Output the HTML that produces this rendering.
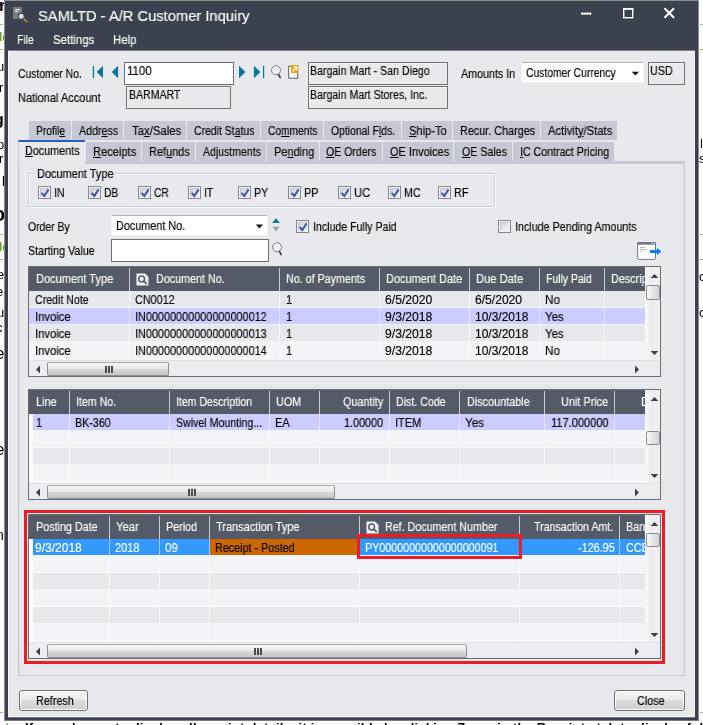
<!DOCTYPE html><html><head><meta charset="utf-8"><title>A/R Customer Inquiry</title><style>
html,body{margin:0;padding:0;}
body{width:703px;height:725px;overflow:hidden;background:#fff;position:relative;font-family:"Liberation Sans",sans-serif;font-size:12px;line-height:14px;color:#000;}
*{box-sizing:border-box;}
.a{position:absolute;}
.t{position:absolute;white-space:nowrap;will-change:transform;-webkit-text-stroke:0.15px currentColor;font-size:12px;line-height:14px;height:14px;transform-origin:0 0;}
.w{color:#fff;}
.tab{position:absolute;background:#c7cad6;height:19px;}
u{text-decoration:underline;text-underline-offset:1px;text-decoration-thickness:1px;}
.fld{position:absolute;border:1px solid #717171;background:#e8e9ed;box-shadow:inset 1px 1px 0 #f4f4f6;}
.inp{position:absolute;border:1px solid #6c6c6c;background:#fff;}
.cb{position:absolute;width:13px;height:13px;border:1px solid #84878c;background:#f4f4f4;}
.cb i{position:absolute;left:1px;top:1px;width:9px;height:9px;border:1px solid #c4c8ce;border-right-color:#e2e4e8;border-bottom-color:#e2e4e8;background:linear-gradient(135deg,#cdd2d9,#f7f7f8);}
.grid{position:absolute;border:1px solid #6d6d6d;background:#ecedf1;overflow:hidden;}
.gh{position:absolute;background:#555a68;height:24px;top:0;}
.sep{position:absolute;width:1px;}
.row{position:absolute;left:0;height:17px;border-bottom:1px solid rgba(255,255,255,0.5);}
.btn{position:absolute;border:1px solid #707070;border-radius:3px;background:linear-gradient(#f4f4f4 0%,#ececec 45%,#dcdcdc 50%,#d0d0d0 100%);box-shadow:inset 0 0 0 1px #fbfbfb;}
</style></head><body>
<div class="a" style="left:0;top:0;width:4px;height:725px;overflow:hidden;">
<span class="a" style="left:-1px;top:-3px;white-space:nowrap;will-change:transform;font-size:17px;line-height:1;font-weight:bold;color:#000;">r</span>
<span class="a" style="left:-1px;top:31px;white-space:nowrap;will-change:transform;font-size:12px;line-height:1;font-weight:bold;color:#6a9f35;">ld</span>
<span class="a" style="left:-3px;top:60px;white-space:nowrap;will-change:transform;font-size:13px;line-height:1;color:#000;">u</span>
<span class="a" style="left:-1px;top:81px;white-space:nowrap;will-change:transform;font-size:13px;line-height:1;color:#000;">r</span>
<span class="a" style="left:-6px;top:112px;white-space:nowrap;will-change:transform;font-size:16px;line-height:1;font-weight:bold;color:#000;">g</span>
<span class="a" style="left:-3px;top:138px;white-space:nowrap;will-change:transform;font-size:13px;line-height:1;color:#000;">o</span>
<span class="a" style="left:-1px;top:152px;white-space:nowrap;will-change:transform;font-size:13px;line-height:1;color:#000;">r</span>
<span class="a" style="left:2px;top:172px;white-space:nowrap;will-change:transform;font-size:13px;line-height:1;color:#000;">p</span>
<span class="a" style="left:-7px;top:204px;white-space:nowrap;will-change:transform;font-size:20px;line-height:1;font-weight:bold;color:#000;">o</span>
<span class="a" style="left:-1px;top:241px;white-space:nowrap;will-change:transform;font-size:12px;line-height:1;font-weight:bold;color:#6a9f35;">ld</span>
<span class="a" style="left:-3px;top:268px;white-space:nowrap;will-change:transform;font-size:13px;line-height:1;color:#000;">e</span>
<span class="a" style="left:-4px;top:285px;white-space:nowrap;will-change:transform;font-size:13px;line-height:1;color:#000;">e</span>
<span class="a" style="left:-3px;top:306px;white-space:nowrap;will-change:transform;font-size:13px;line-height:1;color:#000;">u</span>
<span class="a" style="left:-4px;top:321px;white-space:nowrap;will-change:transform;font-size:13px;line-height:1;color:#000;">c</span>
<span class="a" style="left:-5px;top:345px;white-space:nowrap;will-change:transform;font-size:17px;line-height:1;color:#000;">e</span>
<span class="a" style="left:-5px;top:441px;white-space:nowrap;will-change:transform;font-size:17px;line-height:1;color:#000;">e</span>
<span class="a" style="left:-4px;top:528px;white-space:nowrap;will-change:transform;font-size:14px;line-height:1;color:#000;">n</span>
<div class="a" style="left:0;top:24px;width:4px;height:1px;background:linear-gradient(90deg,#6a9f35 0 1px,transparent 1px 2px,#6a9f35 2px 3px,transparent 3px 4px);"></div>
<div class="a" style="left:0;top:49px;width:4px;height:1px;background:linear-gradient(90deg,#6a9f35 0 1px,transparent 1px 2px,#6a9f35 2px 3px,transparent 3px 4px);"></div>
<div class="a" style="left:0;top:234px;width:4px;height:1px;background:linear-gradient(90deg,#6a9f35 0 1px,transparent 1px 2px,#6a9f35 2px 3px,transparent 3px 4px);"></div>
<div class="a" style="left:0;top:259px;width:4px;height:1px;background:linear-gradient(90deg,#6a9f35 0 1px,transparent 1px 2px,#6a9f35 2px 3px,transparent 3px 4px);"></div>
<div class="a" style="left:0;top:712px;width:4px;height:1px;background:linear-gradient(90deg,#6a9f35 0 1px,transparent 1px 2px,#6a9f35 2px 3px,transparent 3px 4px);"></div>
</div>
<div class="a" style="left:699px;top:0;width:4px;height:725px;overflow:hidden;">
<div class="a" style="left:1px;top:24px;width:3px;height:1px;background:linear-gradient(90deg,#6a9f35 0 1px,transparent 1px 2px,#6a9f35 2px 3px);"></div>
<div class="a" style="left:1px;top:49px;width:3px;height:1px;background:linear-gradient(90deg,#6a9f35 0 1px,transparent 1px 2px,#6a9f35 2px 3px);"></div>
<div class="a" style="left:1px;top:234px;width:3px;height:1px;background:linear-gradient(90deg,#6a9f35 0 1px,transparent 1px 2px,#6a9f35 2px 3px);"></div>
<div class="a" style="left:1px;top:259px;width:3px;height:1px;background:linear-gradient(90deg,#6a9f35 0 1px,transparent 1px 2px,#6a9f35 2px 3px);"></div>
<div class="a" style="left:1px;top:712px;width:3px;height:1px;background:linear-gradient(90deg,#6a9f35 0 1px,transparent 1px 2px,#6a9f35 2px 3px);"></div>
<span class="a" style="left:0.5px;top:137px;white-space:nowrap;will-change:transform;font-size:13px;line-height:1;color:#000;">ls</span>
<span class="a" style="left:0px;top:152px;white-space:nowrap;will-change:transform;font-size:13px;line-height:1;color:#000;">s</span>
<span class="a" style="left:0px;top:270px;white-space:nowrap;will-change:transform;font-size:13px;line-height:1;color:#000;">c</span>
<span class="a" style="left:0px;top:306px;white-space:nowrap;will-change:transform;font-size:13px;line-height:1;color:#000;">c</span>
</div>
<div class="a" style="left:0;top:721px;width:703px;height:4px;overflow:hidden;">
<span class="a" style="right:682px;top:-1px;white-space:nowrap;will-change:transform;font-size:13px;line-height:15px;font-weight:bold;color:#6a9f35;">Note:</span>
<span class="a" style="left:25px;top:-1px;white-space:nowrap;will-change:transform;font-size:13px;line-height:15px;font-weight:bold;letter-spacing:0.2px;">If you choose to display all receipt details, it is possible by clicking Zoom in the Receipts tab to display full transaction if you need to display</span>
</div>
<div class="a" style="left:4px;top:0px;width:695px;height:721px;background:#3c4150;border:1px solid #8d8d8d;border-bottom-color:#7a7c84;"></div>
<div class="a" style="left:8px;top:50px;width:687px;height:667px;background:#e8e9ed;border-left:1px solid #f6f6f8;border-right:1px solid #f6f6f8;border-bottom:1px solid #f6f6f8;"></div>
<div class="a" style="left:8px;top:717px;width:687px;height:1px;background:#6e727c;"></div>
<div class="a" style="left:8px;top:50px;width:687px;height:1px;background:#7d7e84;"></div>
<div class="a" style="left:9px;top:51px;width:685px;height:1px;background:#f2f2f5;"></div>
<svg class="a" style="left:11px;top:5px;" width="20" height="20" viewBox="0 0 20 20"><rect x="2" y="2" width="9" height="12" fill="#7c7c7c"/><rect x="4" y="4" width="5" height="1.2" fill="#d5ecff"/><rect x="4" y="6" width="3.2" height="1.2" fill="#d5ecff"/><line x1="12.5" y1="13.5" x2="16.3" y2="17.2" stroke="#d08a3a" stroke-width="1.6"/><circle cx="10.3" cy="11.3" r="3" fill="#cfe6fb" stroke="#33363f" stroke-width="1"/></svg>
<span class="t w" style="left:37.6px;top:6px;font-size:15.5px;line-height:20px;height:20px;transform:scaleX(0.9493);">SAMLTD - A/R Customer Inquiry</span>
<span class="t w" style="left:17.0px;top:33px;font-size:12.3px;line-height:15px;height:15px;transform:scaleX(0.8427);">File</span>
<span class="t w" style="left:52.8px;top:33px;font-size:12.3px;line-height:15px;height:15px;transform:scaleX(0.9293);">Settings</span>
<span class="t w" style="left:113.0px;top:33px;font-size:12.3px;line-height:15px;height:15px;transform:scaleX(0.9251);">Help</span>
<svg class="a" style="left:570px;top:0px;" width="125" height="30" viewBox="0 0 125 30"><rect x="11" y="12.6" width="10.4" height="2" fill="#fff"/><rect x="53.7" y="8.9" width="9" height="8.8" fill="none" stroke="#fff" stroke-width="1.4"/><rect x="53" y="8" width="10.4" height="1.6" fill="#fff"/><path d="M94.5 8.2 L104 17.7 M104 8.2 L94.5 17.7" stroke="#fff" stroke-width="2.1" fill="none"/></svg>
<span class="t " style="left:18.34px;top:67px;transform:scaleX(0.8622);">Customer No.</span>
<span class="t " style="left:18.32px;top:91px;transform:scaleX(0.9171);">National Account</span>
<svg class="a" style="left:90px;top:64px;" width="180" height="18" viewBox="0 0 180 18"><rect x="2.8" y="1.8" width="1.3" height="12.4" fill="#05759a"/><path d="M13 1.8 L13 14.2 L6.7 8 Z" fill="#05759a"/><path d="M28.1 1.8 L28.1 14.2 L21.8 8 Z" fill="#05759a"/><path d="M149 1.8 L149 14.2 L155.4 8 Z" fill="#05759a"/><path d="M163.9 1.8 L163.9 14.2 L170.5 8 Z" fill="#05759a"/><rect x="173" y="1.8" width="1.2" height="12.4" fill="#05759a"/></svg>
<div class="inp" style="left:124px;top:62px;width:110px;height:23px;"></div>
<span class="t " style="left:126.81px;top:64px;transform:scaleX(0.9509);">1100</span>
<div class="fld" style="left:126px;top:86px;width:105px;height:23px;"></div>
<span class="t " style="left:128.54px;top:88px;transform:scaleX(0.8783);">BARMART</span>
<svg class="a" style="left:270px;top:64px;" width="14" height="16" viewBox="0 0 14 16"><circle cx="6" cy="6.2" r="4.5" fill="#f1f2f5" stroke="#7b8090" stroke-width="1"/><path d="M8.6 10.6 L10.2 13.6" stroke="#3a3f4e" stroke-width="1.7" stroke-linecap="round"/></svg>
<svg class="a" style="left:286px;top:63px;" width="14" height="18" viewBox="0 0 14 18"><rect x="2.7" y="3.2" width="9" height="12" fill="#fdfdfd" stroke="#5d5f66" stroke-width="1"/><rect x="5" y="2" width="7.2" height="8" fill="#f7a00f"/><path d="M6.8 8.2 L10.2 4.8 M7.6 4.2 L10.7 4.2 L10.7 7.3" stroke="#fff" stroke-width="1.3" fill="none"/></svg>
<div class="fld" style="left:308px;top:62px;width:140px;height:23px;"></div>
<span class="t " style="left:310.23px;top:64px;transform:scaleX(0.8837);">Bargain Mart - San Diego</span>
<div class="fld" style="left:308px;top:86px;width:140px;height:23px;"></div>
<span class="t " style="left:310.24px;top:88px;transform:scaleX(0.8826);">Bargain Mart Stores, Inc.</span>
<span class="t " style="left:460.73px;top:67px;transform:scaleX(0.8923);">Amounts In</span>
<div class="a" style="left:521px;top:62px;width:123px;height:21px;background:#fff;border:1px solid #f3f3f6;border-top-color:#b0b1b6;border-radius:2px;"></div>
<span class="t " style="left:526.24px;top:66px;transform:scaleX(0.8615);">Customer Currency</span>
<svg class="a" style="left:631px;top:71px;" width="9" height="6" viewBox="0 0 9 6"><path d="M0.8 0.8 L8 0.8 L4.4 4.6 Z" fill="#111"/></svg>
<div class="fld" style="left:648px;top:62px;width:37px;height:23px;"></div>
<span class="t " style="left:650.23px;top:64px;transform:scaleX(0.8945);">USD</span>
<div class="a" style="left:29px;top:121px;width:42px;height:19px;background:#c6c9d5;"></div>
<span class="t " style="left:36.24px;top:124px;transform:scaleX(0.8559);">Profil<u>e</u></span>
<div class="a" style="left:72px;top:121px;width:51px;height:19px;background:#c6c9d5;"></div>
<span class="t " style="left:78.73px;top:124px;transform:scaleX(0.8895);">Addr<u>e</u>ss</span>
<div class="a" style="left:124px;top:121px;width:62px;height:19px;background:#c6c9d5;"></div>
<span class="t " style="left:131.72px;top:124px;transform:scaleX(0.9463);">Ta<u>x</u>/Sales</span>
<div class="a" style="left:187px;top:121px;width:73px;height:19px;background:#c6c9d5;"></div>
<span class="t " style="left:194.49px;top:124px;transform:scaleX(0.8705);">Credit St<u>a</u>tus</span>
<div class="a" style="left:261px;top:121px;width:62px;height:19px;background:#c6c9d5;"></div>
<span class="t " style="left:268.24px;top:124px;transform:scaleX(0.8508);">Co<u>m</u>ments</span>
<div class="a" style="left:324px;top:121px;width:77px;height:19px;background:#c6c9d5;"></div>
<span class="t " style="left:331.24px;top:124px;transform:scaleX(0.8662);">Optional F<u>l</u>ds.</span>
<div class="a" style="left:402px;top:121px;width:50px;height:19px;background:#c6c9d5;"></div>
<span class="t " style="left:409.22px;top:124px;transform:scaleX(0.9267);"><u>S</u>hip-To</span>
<div class="a" style="left:453px;top:121px;width:87px;height:19px;background:#c6c9d5;"></div>
<span class="t " style="left:459.73px;top:124px;transform:scaleX(0.9016);">Recur. Charges</span>
<div class="a" style="left:541px;top:121px;width:76px;height:19px;background:#c6c9d5;"></div>
<span class="t " style="left:547.72px;top:124px;transform:scaleX(0.9349);">Activit<u>y</u>/Stats</span>
<div class="a" style="left:86px;top:142px;width:55px;height:19px;background:#c6c9d5;"></div>
<span class="t " style="left:92.72px;top:145px;transform:scaleX(0.9254);"><u>R</u>eceipts</span>
<div class="a" style="left:142px;top:142px;width:53px;height:19px;background:#c6c9d5;"></div>
<span class="t " style="left:149.23px;top:145px;transform:scaleX(0.9103);">Ref<u>u</u>nds</span>
<div class="a" style="left:196px;top:142px;width:70px;height:19px;background:#c6c9d5;"></div>
<span class="t " style="left:202.74px;top:145px;transform:scaleX(0.8767);">Adjustments</span>
<div class="a" style="left:267px;top:142px;width:52px;height:19px;background:#c6c9d5;"></div>
<span class="t " style="left:273.73px;top:145px;transform:scaleX(0.9125);">Pe<u>n</u>ding</span>
<div class="a" style="left:320px;top:142px;width:62px;height:19px;background:#c6c9d5;"></div>
<span class="t " style="left:326.49px;top:145px;transform:scaleX(0.8787);"><u>O</u>E Orders</span>
<div class="a" style="left:383px;top:142px;width:70px;height:19px;background:#c6c9d5;"></div>
<span class="t " style="left:389.73px;top:145px;transform:scaleX(0.9149);"><u>O</u>E Invoices</span>
<div class="a" style="left:454px;top:142px;width:58px;height:19px;background:#c6c9d5;"></div>
<span class="t " style="left:461.73px;top:145px;transform:scaleX(0.8858);"><u>O</u>E Sales</span>
<div class="a" style="left:513px;top:142px;width:101px;height:19px;background:#c6c9d5;"></div>
<span class="t " style="left:519.73px;top:145px;transform:scaleX(0.8853);"><u>I</u>C Contract Pricing</span>
<div class="a" style="left:18px;top:161px;width:667px;height:515px;border:1px solid #c6c9d5;border-top-width:3px;background:#e8e9ed;box-shadow:inset 1px 0 0 #dfe1e8,inset -1px 0 0 #dfe1e8;"></div>
<div class="a" style="left:18px;top:140px;width:67px;height:24px;background:#e8e9ed;border-top:2px solid #2a5bd0;border-left:1px solid #c9ccd7;"></div>
<span class="t " style="left:25.33px;top:144px;transform:scaleX(0.8991);"><u>D</u>ocuments</span>
<div class="a" style="left:28px;top:173px;width:467px;height:34px;border:1px solid #cbceda;box-shadow:inset 1px 1px 0 #f8f8fa, 1px 1px 0 #f8f8fa;"></div>
<div class="a" style="left:35px;top:168px;width:80px;height:13px;background:#e8e9ed;"></div>
<span class="t " style="left:37.43px;top:167px;transform:scaleX(0.9125);">Document Type</span>
<div class="cb" style="left:38px;top:186px;"><i></i><svg class="a" style="left:1px;top:1px;" width="10" height="10" viewBox="0 0 10 10"><path d="M1.6 4.9 L4.3 8.0 L8.6 1.4" stroke="#3b57a8" stroke-width="2" fill="none"/></svg></div>
<span class="t " style="left:54.23px;top:186px;transform:scaleX(0.8879);">IN</span>
<div class="cb" style="left:88px;top:186px;"><i></i><svg class="a" style="left:1px;top:1px;" width="10" height="10" viewBox="0 0 10 10"><path d="M1.6 4.9 L4.3 8.0 L8.6 1.4" stroke="#3b57a8" stroke-width="2" fill="none"/></svg></div>
<span class="t " style="left:104.25px;top:186px;transform:scaleX(0.8458);">DB</span>
<div class="cb" style="left:138px;top:186px;"><i></i><svg class="a" style="left:1px;top:1px;" width="10" height="10" viewBox="0 0 10 10"><path d="M1.6 4.9 L4.3 8.0 L8.6 1.4" stroke="#3b57a8" stroke-width="2" fill="none"/></svg></div>
<span class="t " style="left:154.25px;top:186px;transform:scaleX(0.8421);">CR</span>
<div class="cb" style="left:188px;top:186px;"><i></i><svg class="a" style="left:1px;top:1px;" width="10" height="10" viewBox="0 0 10 10"><path d="M1.6 4.9 L4.3 8.0 L8.6 1.4" stroke="#3b57a8" stroke-width="2" fill="none"/></svg></div>
<span class="t " style="left:204.49px;top:186px;transform:scaleX(0.8543);">IT</span>
<div class="cb" style="left:238px;top:186px;"><i></i><svg class="a" style="left:1px;top:1px;" width="10" height="10" viewBox="0 0 10 10"><path d="M1.6 4.9 L4.3 8.0 L8.6 1.4" stroke="#3b57a8" stroke-width="2" fill="none"/></svg></div>
<span class="t " style="left:254.48px;top:186px;transform:scaleX(0.8838);">PY</span>
<div class="cb" style="left:288px;top:186px;"><i></i><svg class="a" style="left:1px;top:1px;" width="10" height="10" viewBox="0 0 10 10"><path d="M1.6 4.9 L4.3 8.0 L8.6 1.4" stroke="#3b57a8" stroke-width="2" fill="none"/></svg></div>
<span class="t " style="left:304.48px;top:186px;transform:scaleX(0.9008);">PP</span>
<div class="cb" style="left:338px;top:186px;"><i></i><svg class="a" style="left:1px;top:1px;" width="10" height="10" viewBox="0 0 10 10"><path d="M1.6 4.9 L4.3 8.0 L8.6 1.4" stroke="#3b57a8" stroke-width="2" fill="none"/></svg></div>
<span class="t " style="left:354.22px;top:186px;transform:scaleX(0.9357);">UC</span>
<div class="cb" style="left:388px;top:186px;"><i></i><svg class="a" style="left:1px;top:1px;" width="10" height="10" viewBox="0 0 10 10"><path d="M1.6 4.9 L4.3 8.0 L8.6 1.4" stroke="#3b57a8" stroke-width="2" fill="none"/></svg></div>
<span class="t " style="left:404.23px;top:186px;transform:scaleX(0.8927);">MC</span>
<div class="cb" style="left:438px;top:186px;"><i></i><svg class="a" style="left:1px;top:1px;" width="10" height="10" viewBox="0 0 10 10"><path d="M1.6 4.9 L4.3 8.0 L8.6 1.4" stroke="#3b57a8" stroke-width="2" fill="none"/></svg></div>
<span class="t " style="left:454.23px;top:186px;transform:scaleX(0.9016);">RF</span>
<span class="t " style="left:28.24px;top:220px;transform:scaleX(0.8670);">Order By</span>
<div class="a" style="left:111px;top:215px;width:157px;height:21px;background:#fff;border:1px solid #f3f3f6;border-top-color:#b0b1b6;border-radius:2px;"></div>
<span class="t " style="left:116.23px;top:219px;transform:scaleX(0.9019);">Document No.</span>
<svg class="a" style="left:255px;top:224px;" width="9" height="6" viewBox="0 0 9 6"><path d="M0.8 0.6 L8 0.6 L4.4 4.4 Z" fill="#111"/></svg>
<svg class="a" style="left:271px;top:217px;" width="10" height="16" viewBox="0 0 10 16"><path d="M1 5.9 L9 5.9 L5 1.2 Z" fill="#0b7a9d"/><path d="M1.4 9.8 L8.6 9.8 L5 14.4 Z" fill="#9c9ea0"/></svg>
<div class="cb" style="left:296px;top:220px;"><i></i><svg class="a" style="left:1px;top:1px;" width="10" height="10" viewBox="0 0 10 10"><path d="M1.6 4.9 L4.3 8.0 L8.6 1.4" stroke="#3b57a8" stroke-width="2" fill="none"/></svg></div>
<span class="t " style="left:312.74px;top:220px;transform:scaleX(0.8832);">Include Fully Paid</span>
<div class="cb" style="left:498px;top:220px;"><i></i></div>
<span class="t " style="left:514.73px;top:220px;transform:scaleX(0.8940);">Include Pending Amounts</span>
<span class="t " style="left:28.23px;top:244px;transform:scaleX(0.8949);">Starting Value</span>
<div class="inp" style="left:111px;top:239px;width:158px;height:23px;"></div>
<svg class="a" style="left:271px;top:241px;" width="14" height="16" viewBox="0 0 14 16"><circle cx="6" cy="6.2" r="4.5" fill="#f1f2f5" stroke="#7b8090" stroke-width="1"/><path d="M8.6 10.6 L10.2 13.6" stroke="#3a3f4e" stroke-width="1.7" stroke-linecap="round"/></svg>
<svg class="a" style="left:636px;top:240px;" width="27" height="21" viewBox="0 0 27 21"><rect x="1.6" y="2.5" width="17.9" height="16.9" rx="1.2" fill="#fff" stroke="#727584" stroke-width="1"/><rect x="1.3" y="2.2" width="18.5" height="2.5" fill="#727584"/><circle cx="16.2" cy="3.4" r="0.55" fill="#fff"/><circle cx="18.2" cy="3.4" r="0.55" fill="#fff"/><rect x="4" y="7" width="5" height="0.9" fill="#a9acb6"/><rect x="4" y="9" width="7" height="0.9" fill="#a9acb6"/><rect x="4" y="11" width="1.8" height="0.9" fill="#a9acb6"/><path d="M13.9 10 L21 10 L21 7.7 L25.3 11.5 L21 15.3 L21 13 L13.9 13 Z" fill="#0a78fa"/></svg>
<div class="grid" style="left:28px;top:266px;width:633px;height:111px;">
<div class="gh" style="left:0;width:616px;"></div>
<div class="row" style="top:24px;width:616px;height:17px;background:#e7e8ec;"></div>
<div class="row" style="top:41px;width:616px;height:17px;background:#ccccff;border-bottom-color:#f1f2f7;"></div>
<div class="row" style="top:58px;width:616px;height:17px;background:#e7e8ec;"></div>
<div class="row" style="top:75px;width:616px;height:17px;background:#f3f4f8;"></div>
<div class="row" style="top:92px;width:616px;height:1px;background:#e7e8ec;"></div>
<div class="sep" style="left:100px;top:1px;height:23px;background:#c9cbd3;"></div>
<div class="sep" style="left:100px;top:24px;height:69px;background:rgba(255,255,255,0.5);"></div>
<div class="sep" style="left:250px;top:1px;height:23px;background:#c9cbd3;"></div>
<div class="sep" style="left:250px;top:24px;height:69px;background:rgba(255,255,255,0.5);"></div>
<div class="sep" style="left:350px;top:1px;height:23px;background:#c9cbd3;"></div>
<div class="sep" style="left:350px;top:24px;height:69px;background:rgba(255,255,255,0.5);"></div>
<div class="sep" style="left:440px;top:1px;height:23px;background:#c9cbd3;"></div>
<div class="sep" style="left:440px;top:24px;height:69px;background:rgba(255,255,255,0.5);"></div>
<div class="sep" style="left:510px;top:1px;height:23px;background:#c9cbd3;"></div>
<div class="sep" style="left:510px;top:24px;height:69px;background:rgba(255,255,255,0.5);"></div>
<div class="sep" style="left:575px;top:1px;height:23px;background:#c9cbd3;"></div>
<div class="sep" style="left:575px;top:24px;height:69px;background:rgba(255,255,255,0.5);"></div>
<div class="a" style="left:616px;top:0;width:15px;height:93px;background:linear-gradient(90deg,#fafafa,#ededef 40%,#f0f0f2);"></div>
<svg class="a" style="left:621px;top:6px;" width="9" height="6" viewBox="0 0 9 6"><path d="M0.6 5 L8.4 5 L4.5 1 Z" fill="#3c3f45"/></svg>
<svg class="a" style="left:621px;top:83px;" width="9" height="6" viewBox="0 0 9 6"><path d="M0.6 1 L8.4 1 L4.5 5 Z" fill="#3c3f45"/></svg>
<div class="a" style="left:617px;top:18px;width:14px;height:15px;border:1px solid #8a8c92;border-radius:2px;background:linear-gradient(90deg,#f6f6f8,#d4d5da);"></div>
<div class="a" style="left:0;top:93px;width:631px;height:16px;background:#ecedf0;border-top:1px solid #e0e1e6;"></div>
<svg class="a" style="left:6px;top:98px;" width="6" height="9" viewBox="0 0 6 9"><path d="M5 0.6 L5 8.4 L1 4.5 Z" fill="#3c3f45"/></svg>
<svg class="a" style="left:605px;top:98px;" width="6" height="9" viewBox="0 0 6 9"><path d="M1 0.6 L1 8.4 L5 4.5 Z" fill="#3c3f45"/></svg>
<div class="a" style="left:18px;top:95px;width:122px;height:14px;border:1px solid #8e8f94;border-top-color:#a9aaae;border-radius:2px;background:linear-gradient(#f4f4f5 0%,#e9e9eb 45%,#d6d6d9 55%,#c6c6ca 100%);"></div>
<div class="a" style="left:76px;top:99px;width:8px;height:7px;background:linear-gradient(90deg,#4a4a4e 0 2px,transparent 2px 3px,#4a4a4e 3px 5px,transparent 5px 6px,#4a4a4e 6px 8px);"></div>
</div>
<span class="t w" style="left:35.72px;top:272px;transform:scaleX(0.9210);">Document Type</span>
<svg class="a" style="left:136px;top:272.6px;" width="13" height="13" viewBox="0 0 13 13"><path d="M0.5 0.5 L9 0.5 L12.5 4 L12.5 12.5 L0.5 12.5 Z" fill="#f2f3f5"/><circle cx="5.6" cy="6" r="2.9" fill="#f2f3f5" stroke="#555a68" stroke-width="1.5"/><path d="M7.8 8.2 L10.8 11.2" stroke="#555a68" stroke-width="1.8"/></svg>
<span class="t w" style="left:155.73px;top:272px;transform:scaleX(0.8952);">Document No.</span>
<span class="t w" style="left:285.73px;top:272px;transform:scaleX(0.8924);">No. of Payments</span>
<span class="t w" style="left:385.73px;top:272px;transform:scaleX(0.9138);">Document Date</span>
<span class="t w" style="left:475.72px;top:272px;transform:scaleX(0.9313);">Due Date</span>
<span class="t w" style="left:545.74px;top:272px;transform:scaleX(0.8699);">Fully Paid</span>
<span class="t w" style="left:611.13px;top:272px;transform:scaleX(0.9000);max-width:37.6px;overflow:hidden;">Description</span>
<span class="t " style="left:35.23px;top:293px;transform:scaleX(0.8840);">Credit Note</span>
<span class="t " style="left:134.73px;top:293px;transform:scaleX(0.9011);">CN0012</span>
<span class="t " style="left:286.03px;top:293px;transform:scaleX(0.9000);">1</span>
<span class="t " style="left:384.70px;top:293px;transform:scaleX(1.0130);">6/5/2020</span>
<span class="t " style="left:474.70px;top:293px;transform:scaleX(1.0075);">6/5/2020</span>
<span class="t " style="left:545.11px;top:293px;transform:scaleX(0.9687);">No</span>
<span class="t " style="left:35.22px;top:310px;transform:scaleX(0.9395);">Invoice</span>
<span class="t " style="left:134.73px;top:310px;transform:scaleX(0.9052);">IN00000000000000000012</span>
<span class="t " style="left:286.03px;top:310px;transform:scaleX(0.9000);">1</span>
<span class="t " style="left:384.70px;top:310px;transform:scaleX(1.0130);">9/3/2018</span>
<span class="t " style="left:474.70px;top:310px;transform:scaleX(0.9984);">10/3/2018</span>
<span class="t " style="left:545.11px;top:310px;transform:scaleX(0.9520);">Yes</span>
<span class="t " style="left:35.22px;top:327px;transform:scaleX(0.9395);">Invoice</span>
<span class="t " style="left:134.73px;top:327px;transform:scaleX(0.9052);">IN00000000000000000013</span>
<span class="t " style="left:286.03px;top:327px;transform:scaleX(0.9000);">1</span>
<span class="t " style="left:384.70px;top:327px;transform:scaleX(1.0130);">9/3/2018</span>
<span class="t " style="left:474.70px;top:327px;transform:scaleX(0.9984);">10/3/2018</span>
<span class="t " style="left:545.11px;top:327px;transform:scaleX(0.9520);">Yes</span>
<span class="t " style="left:35.22px;top:344px;transform:scaleX(0.9395);">Invoice</span>
<span class="t " style="left:134.73px;top:344px;transform:scaleX(0.9052);">IN00000000000000000014</span>
<span class="t " style="left:286.03px;top:344px;transform:scaleX(0.9000);">1</span>
<span class="t " style="left:384.70px;top:344px;transform:scaleX(1.0130);">9/3/2018</span>
<span class="t " style="left:474.70px;top:344px;transform:scaleX(0.9984);">10/3/2018</span>
<span class="t " style="left:545.11px;top:344px;transform:scaleX(0.9687);">No</span>
<div class="grid" style="left:28px;top:389px;width:633px;height:111px;">
<div class="gh" style="left:0;width:616px;"></div>
<div class="row" style="top:24px;width:616px;height:17px;background:#ccccff;border-bottom-color:#f1f2f7;"></div>
<div class="row" style="top:41px;width:616px;height:17px;background:#f3f4f8;"></div>
<div class="row" style="top:58px;width:616px;height:17px;background:#e7e8ec;"></div>
<div class="row" style="top:75px;width:616px;height:17px;background:#f3f4f8;"></div>
<div class="row" style="top:92px;width:616px;height:1px;background:#e7e8ec;"></div>
<div class="a" style="left:0;top:24px;width:4px;height:69px;background:#fbfbfd;"></div>
<div class="sep" style="left:40px;top:1px;height:23px;background:#c9cbd3;"></div>
<div class="sep" style="left:40px;top:24px;height:69px;background:rgba(255,255,255,0.5);"></div>
<div class="sep" style="left:140px;top:1px;height:23px;background:#c9cbd3;"></div>
<div class="sep" style="left:140px;top:24px;height:69px;background:rgba(255,255,255,0.5);"></div>
<div class="sep" style="left:240px;top:1px;height:23px;background:#c9cbd3;"></div>
<div class="sep" style="left:240px;top:24px;height:69px;background:rgba(255,255,255,0.5);"></div>
<div class="sep" style="left:290px;top:1px;height:23px;background:#c9cbd3;"></div>
<div class="sep" style="left:290px;top:24px;height:69px;background:rgba(255,255,255,0.5);"></div>
<div class="sep" style="left:360px;top:1px;height:23px;background:#c9cbd3;"></div>
<div class="sep" style="left:360px;top:24px;height:69px;background:rgba(255,255,255,0.5);"></div>
<div class="sep" style="left:430px;top:1px;height:23px;background:#c9cbd3;"></div>
<div class="sep" style="left:430px;top:24px;height:69px;background:rgba(255,255,255,0.5);"></div>
<div class="sep" style="left:515px;top:1px;height:23px;background:#c9cbd3;"></div>
<div class="sep" style="left:515px;top:24px;height:69px;background:rgba(255,255,255,0.5);"></div>
<div class="sep" style="left:585px;top:1px;height:23px;background:#c9cbd3;"></div>
<div class="sep" style="left:585px;top:24px;height:69px;background:rgba(255,255,255,0.5);"></div>
<div class="a" style="left:616px;top:0;width:15px;height:93px;background:linear-gradient(90deg,#fafafa,#ededef 40%,#f0f0f2);"></div>
<svg class="a" style="left:621px;top:6px;" width="9" height="6" viewBox="0 0 9 6"><path d="M0.6 5 L8.4 5 L4.5 1 Z" fill="#3c3f45"/></svg>
<svg class="a" style="left:621px;top:83px;" width="9" height="6" viewBox="0 0 9 6"><path d="M0.6 1 L8.4 1 L4.5 5 Z" fill="#3c3f45"/></svg>
<div class="a" style="left:617px;top:41px;width:14px;height:14px;border:1px solid #8a8c92;border-radius:2px;background:linear-gradient(90deg,#f6f6f8,#d4d5da);"></div>
<div class="a" style="left:0;top:93px;width:631px;height:16px;background:#ecedf0;border-top:1px solid #e0e1e6;"></div>
<svg class="a" style="left:6px;top:98px;" width="6" height="9" viewBox="0 0 6 9"><path d="M5 0.6 L5 8.4 L1 4.5 Z" fill="#3c3f45"/></svg>
<svg class="a" style="left:605px;top:98px;" width="6" height="9" viewBox="0 0 6 9"><path d="M1 0.6 L1 8.4 L5 4.5 Z" fill="#3c3f45"/></svg>
<div class="a" style="left:18px;top:95px;width:288px;height:14px;border:1px solid #8e8f94;border-top-color:#a9aaae;border-radius:2px;background:linear-gradient(#f4f4f5 0%,#e9e9eb 45%,#d6d6d9 55%,#c6c6ca 100%);"></div>
<div class="a" style="left:159px;top:99px;width:8px;height:7px;background:linear-gradient(90deg,#4a4a4e 0 2px,transparent 2px 3px,#4a4a4e 3px 5px,transparent 5px 6px,#4a4a4e 6px 8px);"></div>
</div>
<span class="t w" style="left:36.23px;top:395px;transform:scaleX(0.9118);">Line</span>
<span class="t w" style="left:75.73px;top:395px;transform:scaleX(0.8854);">Item No.</span>
<span class="t w" style="left:176.49px;top:395px;transform:scaleX(0.8783);">Item Description</span>
<span class="t w" style="left:275.73px;top:395px;transform:scaleX(0.8990);">UOM</span>
<span class="t w" style="left:343.23px;top:395px;transform:scaleX(0.8988);">Quantity</span>
<span class="t w" style="left:396.23px;top:395px;transform:scaleX(0.8863);">Dist. Code</span>
<span class="t w" style="left:466.73px;top:395px;transform:scaleX(0.9035);">Discountable</span>
<span class="t w" style="left:560.73px;top:395px;transform:scaleX(0.9070);">Unit Price</span>
<span class="t w" style="left:640.73px;top:395px;transform:scaleX(0.9000);max-width:4.7px;overflow:hidden;">Discount</span>
<span class="t " style="left:35.73px;top:416px;transform:scaleX(0.9000);">1</span>
<span class="t " style="left:75.23px;top:416px;transform:scaleX(0.8909);">BK-360</span>
<span class="t " style="left:175.73px;top:416px;transform:scaleX(0.8847);">Swivel Mounting...</span>
<span class="t " style="left:275.22px;top:416px;transform:scaleX(0.9178);">EA</span>
<span class="t " style="left:343.94px;top:416px;transform:scaleX(0.9000);">1.00000</span>
<span class="t " style="left:394.73px;top:416px;transform:scaleX(0.9136);">ITEM</span>
<span class="t " style="left:464.71px;top:416px;transform:scaleX(0.9712);">Yes</span>
<span class="t " style="left:551.32px;top:416px;transform:scaleX(0.9215);">117.000000</span>
<div class="a" style="left:24px;top:510px;width:641px;height:154px;border:3px solid #ed1c24;"></div>
<div class="grid" style="left:28px;top:514px;width:633px;height:145px;">
<div class="gh" style="left:0;width:616px;"></div>
<div class="row" style="top:24px;width:616px;height:17px;background:#3399ff;border-bottom-color:#f1f2f7;"></div>
<div class="row" style="top:41px;width:616px;height:17px;background:#f3f4f8;"></div>
<div class="row" style="top:58px;width:616px;height:17px;background:#e7e8ec;"></div>
<div class="row" style="top:75px;width:616px;height:17px;background:#f3f4f8;"></div>
<div class="row" style="top:92px;width:616px;height:17px;background:#e7e8ec;"></div>
<div class="row" style="top:109px;width:616px;height:17px;background:#f3f4f8;"></div>
<div class="row" style="top:126px;width:616px;height:1px;background:#e7e8ec;"></div>
<div class="a" style="left:0;top:24px;width:4px;height:103px;background:#fbfbfd;"></div>
<div class="sep" style="left:80px;top:1px;height:23px;background:#c9cbd3;"></div>
<div class="sep" style="left:80px;top:24px;height:103px;background:rgba(255,255,255,0.5);"></div>
<div class="sep" style="left:130px;top:1px;height:23px;background:#c9cbd3;"></div>
<div class="sep" style="left:130px;top:24px;height:103px;background:rgba(255,255,255,0.5);"></div>
<div class="sep" style="left:180px;top:1px;height:23px;background:#c9cbd3;"></div>
<div class="sep" style="left:180px;top:24px;height:103px;background:rgba(255,255,255,0.5);"></div>
<div class="sep" style="left:330px;top:1px;height:23px;background:#c9cbd3;"></div>
<div class="sep" style="left:330px;top:24px;height:103px;background:rgba(255,255,255,0.5);"></div>
<div class="sep" style="left:490px;top:1px;height:23px;background:#c9cbd3;"></div>
<div class="sep" style="left:490px;top:24px;height:103px;background:rgba(255,255,255,0.5);"></div>
<div class="sep" style="left:590px;top:1px;height:23px;background:#c9cbd3;"></div>
<div class="sep" style="left:590px;top:24px;height:103px;background:rgba(255,255,255,0.5);"></div>
<div class="a" style="left:616px;top:0;width:15px;height:127px;background:linear-gradient(90deg,#fafafa,#ededef 40%,#f0f0f2);"></div>
<svg class="a" style="left:621px;top:6px;" width="9" height="6" viewBox="0 0 9 6"><path d="M0.6 5 L8.4 5 L4.5 1 Z" fill="#3c3f45"/></svg>
<svg class="a" style="left:621px;top:117px;" width="9" height="6" viewBox="0 0 9 6"><path d="M0.6 1 L8.4 1 L4.5 5 Z" fill="#3c3f45"/></svg>
<div class="a" style="left:617px;top:18px;width:14px;height:14px;border:1px solid #8a8c92;border-radius:2px;background:linear-gradient(90deg,#f6f6f8,#d4d5da);"></div>
<div class="a" style="left:0;top:127px;width:631px;height:16px;background:#ecedf0;border-top:1px solid #e0e1e6;"></div>
<svg class="a" style="left:6px;top:132px;" width="6" height="9" viewBox="0 0 6 9"><path d="M5 0.6 L5 8.4 L1 4.5 Z" fill="#3c3f45"/></svg>
<svg class="a" style="left:605px;top:132px;" width="6" height="9" viewBox="0 0 6 9"><path d="M1 0.6 L1 8.4 L5 4.5 Z" fill="#3c3f45"/></svg>
<div class="a" style="left:18px;top:129px;width:420px;height:14px;border:1px solid #8e8f94;border-top-color:#a9aaae;border-radius:2px;background:linear-gradient(#f4f4f5 0%,#e9e9eb 45%,#d6d6d9 55%,#c6c6ca 100%);"></div>
<div class="a" style="left:225px;top:133px;width:8px;height:7px;background:linear-gradient(90deg,#4a4a4e 0 2px,transparent 2px 3px,#4a4a4e 3px 5px,transparent 5px 6px,#4a4a4e 6px 8px);"></div>
</div>
<span class="t w" style="left:36.23px;top:520px;transform:scaleX(0.8975);">Posting Date</span>
<span class="t w" style="left:115.72px;top:520px;transform:scaleX(0.9369);">Year</span>
<span class="t w" style="left:165.73px;top:520px;transform:scaleX(0.8985);">Period</span>
<span class="t w" style="left:216.48px;top:520px;transform:scaleX(0.9131);">Transaction Type</span>
<svg class="a" style="left:365.5px;top:520.6px;" width="13" height="13" viewBox="0 0 13 13"><path d="M0.5 0.5 L9 0.5 L12.5 4 L12.5 12.5 L0.5 12.5 Z" fill="#f2f3f5"/><circle cx="5.6" cy="6" r="2.9" fill="#f2f3f5" stroke="#555a68" stroke-width="1.5"/><path d="M7.8 8.2 L10.8 11.2" stroke="#555a68" stroke-width="1.8"/></svg>
<span class="t w" style="left:385.48px;top:520px;transform:scaleX(0.8918);">Ref. Document Number</span>
<span class="t w" style="left:533.73px;top:520px;transform:scaleX(0.8834);">Transaction Amt.</span>
<span class="t w" style="left:626.03px;top:520px;transform:scaleX(0.9000);max-width:21.1px;overflow:hidden;">Bank</span>
<div class="a" style="left:210px;top:539px;width:149px;height:16px;background:#cc6600;"></div>
<span class="t w" style="left:35.20px;top:541px;transform:scaleX(1.0020);">9/3/2018</span>
<span class="t w" style="left:115.23px;top:541px;transform:scaleX(0.9156);">2018</span>
<span class="t w" style="left:165.21px;top:541px;transform:scaleX(0.9546);">09</span>
<span class="t " style="left:215.23px;top:541px;transform:scaleX(0.8981);">Receipt - Posted</span>
<span class="t w" style="left:364.98px;top:541px;transform:scaleX(0.8925);">PY00000000000000000091</span>
<span class="t w" style="left:577.53px;top:541px;transform:scaleX(0.9036);">-126.95</span>
<span class="t w" style="left:625.53px;top:541px;transform:scaleX(0.9000);max-width:21.6px;overflow:hidden;">CCB</span>
<div class="a" style="left:357px;top:534px;width:165px;height:25px;border:3px solid #ed1c24;"></div>
<div class="btn" style="left:19px;top:690px;width:69px;height:21px;"></div>
<span class="t " style="left:35.53px;top:694px;transform:scaleX(0.9013);">Refresh</span>
<div class="btn" style="left:614px;top:690px;width:71px;height:21px;"></div>
<span class="t " style="left:636.73px;top:694px;transform:scaleX(0.9020);">Close</span>
</body></html>
